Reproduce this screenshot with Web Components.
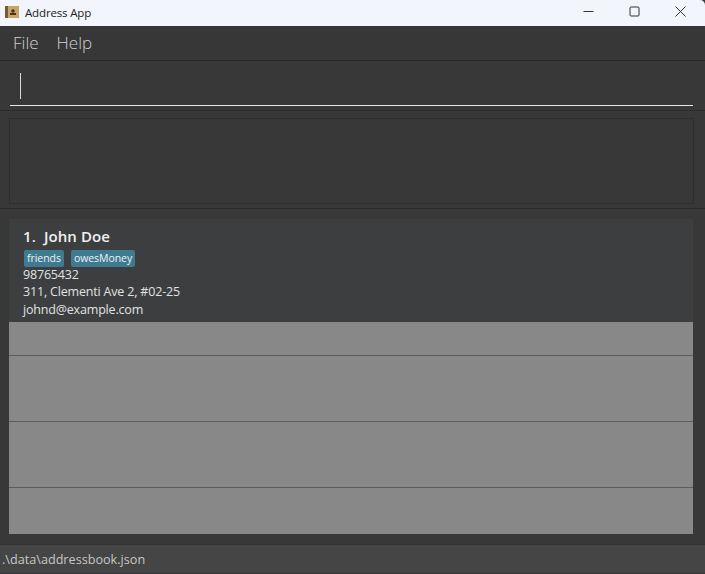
<!DOCTYPE html>
<html>
<head>
<meta charset="utf-8">
<title>Address App</title>
<style>
  html, body { margin: 0; height: 100%; background: #383838; }
  body { font-family: "Open Sans", "Noto Sans", sans-serif; }
  address-app { height: 574px; }
</style>
</head>
<body>
<address-app></address-app>
<script>
window.customElements.define('title-bar', class extends HTMLElement {
  constructor() {
    super();
    this.attachShadow({ mode: 'open' }).innerHTML = `
      <style>
        :host { display: flex; align-items: center; height: 26px; background: #f2f5fb; color: #222; font-size: 11.5px; letter-spacing: -0.15px; padding: 0 2px 2px 5px; box-sizing: border-box; border-top-right-radius: 5px; }
        .logo { margin-right: 6px; display: block; }
        .title { flex: 1; }
        .btn { width: 46px; display: flex; justify-content: center; padding-bottom: 2px; }
      </style>
      <svg class="logo" width="14" height="12" viewBox="0 0 14 12">
        <rect width="14" height="12" fill="#c7a468"/>
        <rect width="3" height="12" fill="#75593a"/>
        <circle cx="8" cy="5" r="1.8" fill="#4a3418"/>
        <rect x="5" y="7" width="6" height="2" fill="#4a3418"/>
      </svg>
      <span class="title"><slot></slot></span>
      <span class="btn"><svg width="11" height="11" viewBox="0 0 11 11"><path d="M0.5 5.5H10.5" stroke="#333" fill="none"/></svg></span>
      <span class="btn"><svg width="11" height="11" viewBox="0 0 11 11"><rect x="1" y="1" width="9" height="9" rx="1" stroke="#333" fill="none"/></svg></span>
      <span class="btn"><svg width="11" height="11" viewBox="0 0 11 11"><path d="M0.5 0.5L10.5 10.5M10.5 0.5L0.5 10.5" stroke="#333" fill="none"/></svg></span>
    `;
  }
});

window.customElements.define('menu-bar', class extends HTMLElement {
  constructor() {
    super();
    this.attachShadow({ mode: 'open' }).innerHTML = `
      <style>
        :host { display: flex; gap: 18px; align-items: center; height: 35px; padding: 0 13px 1px; box-sizing: border-box; background: #373737; border-bottom: 1px solid #2a2a2a; color: #cfcfcf; font-size: 17px; font-weight: 300; }
      </style>
      <slot></slot>
    `;
  }
});

window.customElements.define('command-box', class extends HTMLElement {
  constructor() {
    super();
    this.attachShadow({ mode: 'open' }).innerHTML = `
      <style>
        :host { display: block; height: 50px; padding: 11px 12px 0 10px; box-sizing: border-box; background: #383838; border-bottom: 1px solid #2c2c2c; }
        .field { height: 32px; padding: 1px 0 0 10px; border-bottom: 1px solid #e6e6e6; box-sizing: content-box; }
        .caret { display: block; width: 1px; height: 26px; background: #d8d8d8; }
      </style>
      <div class="field"><span class="caret"></span></div>
    `;
  }
});

window.customElements.define('result-box', class extends HTMLElement {
  constructor() {
    super();
    this.attachShadow({ mode: 'open' }).innerHTML = `
      <style>
        :host { display: block; height: 98px; padding: 7px 11px 4px 9px; box-sizing: border-box; background: #383838; border-bottom: 1px solid #2a2a2a; }
        .inner { height: 100%; box-sizing: border-box; border: 1px solid #2e2e2e; }
      </style>
      <div class="inner"></div>
    `;
  }
});

window.customElements.define('person-card', class extends HTMLElement {
  constructor() {
    super();
    this.attachShadow({ mode: 'open' }).innerHTML = `
      <style>
        :host { display: block; height: 103px; padding: 7px 14px 0; box-sizing: border-box; background: #3c3e3f; color: #e2e2e2; font-size: 12.5px; letter-spacing: -0.18px; line-height: 17.3px; }
        .name { font-size: 15px; font-weight: 600; line-height: 21px; color: #f0f0f0; letter-spacing: 0.1px; }
        .tags { display: flex; gap: 7px; margin: 3px 0 -1px 1px; }
        .tag { background: #3e7b91; color: #f2f2f2; font-size: 10.5px; letter-spacing: -0.05px; line-height: 17px; padding: 0 3px; border-radius: 2px; }
      </style>
      <div class="name"><slot name="name"></slot></div>
      <div class="tags"><span class="tag">friends</span><span class="tag">owesMoney</span></div>
      <div><slot name="phone"></slot></div>
      <div><slot name="address"></slot></div>
      <div><slot name="email"></slot></div>
    `;
  }
});

window.customElements.define('empty-rows', class extends HTMLElement {
  constructor() {
    super();
    this.attachShadow({ mode: 'open' }).innerHTML = `
      <style>
        :host { display: grid; grid-template-rows: 34px 66px 66px 46px; background: #888; }
        div { border-bottom: 1px solid #5c5c5c; box-sizing: border-box; }
        div:last-child { border-bottom: 0; }
      </style>
      <div></div><div></div><div></div><div></div>
    `;
  }
});

window.customElements.define('status-bar', class extends HTMLElement {
  constructor() {
    super();
    this.attachShadow({ mode: 'open' }).innerHTML = `
      <style>
        :host { display: flex; align-items: center; height: 30px; padding-left: 2px; box-sizing: border-box; background: #454545; border-top: 1px solid #333; border-bottom: 1px solid #34353a; color: #c6c6c6; font-size: 12.65px; }
      </style>
      <slot></slot>
    `;
  }
});

window.customElements.define('address-app', class extends HTMLElement {
  constructor() {
    super();
    this.attachShadow({ mode: 'open' }).innerHTML = `
      <style>
        :host { display: flex; flex-direction: column; width: 705px; background: #383838; overflow: hidden; }
        .list { flex: 1; padding: 10px 12px 10px 9px; }
      </style>
      <title-bar>Address App</title-bar>
      <menu-bar><span>File</span><span>Help</span></menu-bar>
      <command-box></command-box>
      <result-box></result-box>
      <div class="list">
        <person-card>
          <span slot="name">1.&nbsp; John Doe</span>
          <span slot="phone">98765432</span>
          <span slot="address">311, Clementi Ave 2, #02-25</span>
          <span slot="email">johnd@example.com</span>
        </person-card>
        <empty-rows></empty-rows>
      </div>
      <status-bar>.\\data\\addressbook.json</status-bar>
    `;
  }
});
</script>
</body>
</html>
